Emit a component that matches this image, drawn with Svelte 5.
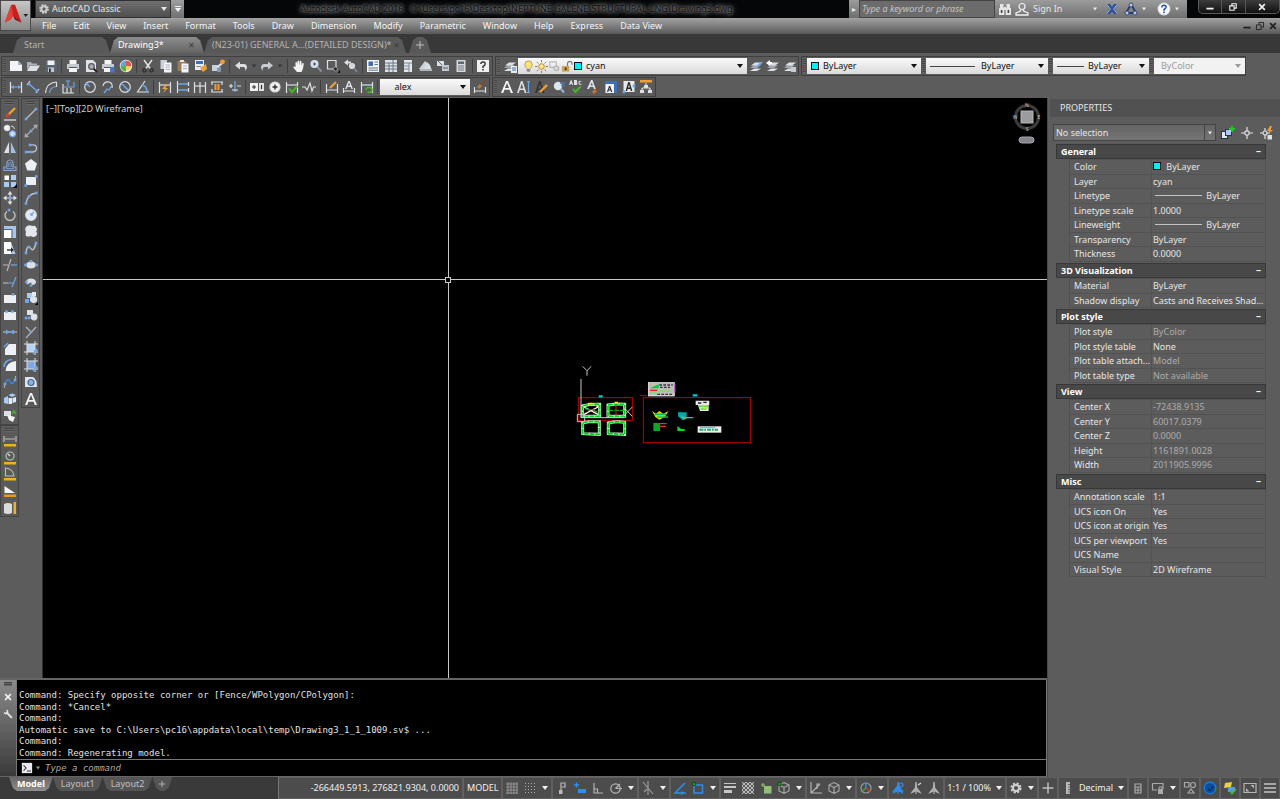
<script>
  const W = "#dcdfe4";
  const B = "#6ea6e8";
  const O = "#f0a030";
  const G = "#49b02c";
  const D = "#2b2b2b";

  // small helpers, every icon is drawn on a 14 x 14 grid
  const s = (d, color = W, width = 1.2) =>
    `<path d="${d}" fill="none" stroke="${color}" stroke-width="${width}"/>`;
  const f = (d, color = W) => `<path d="${d}" fill="${color}"/>`;
  const c = (x, y, r, fill = "none", stroke = W, width = 1.2) =>
    `<circle cx="${x}" cy="${y}" r="${r}" fill="${fill}" stroke="${stroke}" stroke-width="${width}"/>`;
  const dot = (x, y, color = B) => f(`M${x - 1.3} ${y - 1.3}h2.6v2.6h-2.6z`, color);
  const dots = (...points) => points.map(([x, y]) => dot(x, y)).join("");

  const letterA = "M1 13L6 1H8L13 13H10.8L9.6 9.8H4.4L3.2 13ZM5 8H9L7 3Z";
  const smallA = "M3 9L6.2 1H7.8L11 9H9.4L8.6 7H5.4L4.6 9ZM5.9 5.6H8.1L7 2.8Z";
  const printer = f("M3.5 1H10.5V5H3.5Z", "#f4f4f4") + f("M1 5H13V10H1Z", "#c4cad2") + f("M3 8.5H11V13H3Z", "#f4f4f4") + s("M3 8.5H11", "#555", 1);
  const layers = f("M1 9L5 6H12L8 9Z", "#9fa6b0") + f("M2 6.5L6 3.5H13L9 6.5Z", W) + f("M1 12L5 9.5H12L8 12Z", W);
  const dimFrame = s("M1.5 2V13M12.5 2V13") + s("M2 5H12");
  const annot = "M6.3 1H7.7L8.2 7L13 13L7.6 10.5V13H6.4V10.5L1 13L5.8 7Z";
  const cube = s("M7 1.5L12 4V10L7 12.5L2 10V4ZM2 4L7 6.5L12 4M7 6.5V12.5", "#aaa", 1.1);

  const icons = {
    new: f("M1 2H9L13 6V12H1Z", "#f2f4f8") + f("M9 2V6H13Z", "#aab2c0"),
    open: f("M1 3H5L6 4.5H11V6H4L1 11Z", "#a9b0b8") + f("M4 6.5H14L10.5 12H1Z", W),
    save: f("M1.5 1.5H12.5V13H1.5Z", "#5b6472") + f("M3.5 1.5H10.5V6H3.5Z", "#eef1f5") + f("M4 8.5H10V13H4Z", "#bfc7d2") + f("M5 9.5H6.8V13H5Z", D),
    print: printer,
    preview: f("M2 1H9L12 4V13H2Z", "#dfe3e8") + c(7.5, 7.5, 2.8, "#aab", "#555") + s("M9.6 9.6L13 13", "#222", 2),
    publish: printer + f("M9 8H13.5V13.5H9Z", "#4d79b8"),
    globe: c(7, 7, 5.6, "#f4d35e", "#eee") + f("M7 1.5A5.5 5.5 0 0 1 12.5 7H7Z", "#e0564a") + f("M7 7V12.5A5.5 5.5 0 0 1 1.5 7Z", "#56b04c") + f("M1.5 7A5.5 5.5 0 0 1 7 1.5V7Z", "#5aa9e0"),
    cut: s("M3 1L9.5 10M11 1L4.5 10", "#e6e6e6", 1.4) + c(3.5, 11.3, 1.7, "none", D) + c(10.5, 11.3, 1.7, "none", D),
    copy: f("M1.5 1H8V10H1.5Z", "#cbd0d8") + f("M5 3.5H12.5V13.5H5Z", "#f3f5f8") + s("M6.5 6H11M6.5 8.2H11M6.5 10.5H11", "#9aa3b0", 0.8),
    paste: f("M1.5 2H10V12H1.5Z", "#9b7d55") + f("M4 1H8V3H4Z", "#e4e4e4") + f("M5.5 4.5H12.5V13.5H5.5Z", "#f3f5f8") + s("M7 7H11M7 9.5H11", "#9aa3b0", 0.8),
    match: f("M1 1H10V11H1Z", "#e9edf4") + f("M2 2H9V5H2Z", "#3d6fb5") + f("M6 9L12 5L13 10L9 13Z", O) + s("M2.5 7.5H7", "#789", 1),
    block: f("M1 6H8V12H1Z", "#c6d0de") + f("M6 8H10V13H6Z", "#8696aa") + f("M5 8L12 2L13 4L7 9Z", W) + c(11.5, 2.8, 1.8, O, O),
    undo: f("M1 6.5L6 2.5V5H10Q13 5 13 9L11 12Q12 8 9 8H6V10.5Z"),
    redo: f("M13 6.5L8 2.5V5H4Q1 5 1 9L3 12Q2 8 5 8H8V10.5Z", "#c7cbd0"),
    pan: f("M3.5 8V3.5Q4.2 2.6 5 3.5V6L5.6 2Q6.4 1 7.2 2V6L8 2Q8.8 1.2 9.5 2.4V6.5L10.6 4Q11.6 3.6 11.8 4.8L11 9.5L9.5 13H5L1.2 8.5Q1.6 7 3.5 8Z", "#f2f2f2"),
    zoom: c(5.5, 5, 3.5, "#cfe0f2", W) + s("M8.3 7.8L12.5 12.5", "#8993a0", 2) + s("M4 5H7M5.5 3.5V6.5", "#345", 0.9),
    zoomwin: s("M1.5 1.5H10V10H1.5Z") + c(9.5, 10, 2, "#222", "#999", 1) + f("M12 14H14V11Z", "#000"),
    zoomprev: c(8, 7, 2.5, "#cfd6de", W) + s("M10 9L13 13", "#7c8590", 1.8) + f("M0 3.5L4 0.5V2.5H7V4.5H4V6.5Z"),
    props: f("M1 1H13V13H1Z", "#f0f2f6") + f("M2.5 2.5H7V7H2.5Z", "#3d6fb5") + s("M8.5 3H12M8.5 5.5H12M2.5 9H12M2.5 11.2H12", "#6b7685", 1),
    center: f("M1 1H13V13H1Z", "#dde1e8") + s("M1 4H13M5 4V13M9 1V13M1 7H13M1 10H13", "#6b7685", 1),
    palettes: f("M3 1H11V13H3Z", "#e4e7ec") + s("M3 4H11M8 4V13M3 7H8M3 10H8", "#7d8794", 1),
    sheets: f("M0 10L6 2L8 4L4 12Z", "#cfd4da") + f("M4 11L8 3L11 6L13 12Z", W) + f("M1 10H13V12H1Z", "#aeb5bd"),
    markup: f("M1 2H8V7H1Z", W) + f("M6 6H13V12H6Z", "#c2c8d0") + s("M2 2L6 6M8 3L12 5M7 9H12", "#5c6570", 1),
    calc: f("M2.5 1H11.5V13H2.5Z", "#d5d8dc") + f("M4 2.5H10V5H4Z", "#60676f") + s("M4 7H10M4 9H10M4 11H10", "#777e87", 1),
    help: f("M1 1H13V13H1Z", "#f0f0f0") + s("M4.8 5Q5 3 7 3Q9.3 3 9.2 5Q9 6.5 7 7.5V9", "#333", 1.5) + f("M6.2 10H7.8V11.5H6.2Z", "#333"),
    layerprops: layers + f("M8 7H14V14H8Z", "#e8ecf2") + s("M9 9H13M9 11H13", "#3d6fb5", 1),
    layerset: layers + s("M8 8L13 3", "#6ea6e8", 1.8),
    layerprev: layers + f("M0 4L4 1V3H6V5H4V7Z", "#fff"),
    layerstate: layers + f("M8 8H13V13H8Z", "#c6ccd4"),

    dimlin: s("M1.5 2V13M12.5 2V13", W, 1.3) + s("M2 7H12", B) + f("M2 7L5 5V9ZM12 7L9 5V9Z", B),
    dimali: s("M1 5L4 1M10 13L13 9") + s("M3 4L11 11", B, 1.5) + dots([3, 4], [11, 11]),
    dimarc: s("M1.5 13Q2 3 12.5 2") + s("M5.5 13Q6 7 12.5 6.5", B) + s("M12.5 2V7"),
    dimord: s("M2 4V13H13M6 13V8M10 13V8") + s("M3 7H13V2M5 1H9M7 1V6", B, 1.1),
    dimrad: c(7, 7, 5.3) + s("M7 7L3 3", B) + f("M2.5 2.5L6 4L4 6Z", B),
    dimjog: s("M2 6Q3 1 8 2Q12 3 11 8") + s("M3 13L6 9L8 10L11 5", B, 1.3),
    dimdia: c(7, 7, 5.3) + s("M3.5 3.5L10.5 10.5", B, 1.6),
    dimang: s("M9 1L1.5 12H13", W) + s("M6 5Q11 6 11 12", B, 1.6),
    qdim: dimFrame + f("M8 4L4 9H7L5 13L10 8H7.5L9.5 4Z", O),
    dimbase: s("M1.5 1V13") + s("M2 4H12M2 10H12", B, 1.5) + s("M12.5 2V6M12.5 8V12"),
    dimcont: s("M1.5 2V13M7 2V13M12.5 2V13") + s("M2 6H12"),
    dimspace: s("M1 2H13M1 12H13M2 2V5M12 2V5M2 12V9M12 12V9") + f("M4.5 4H9.5V10H4.5Z", O) + s("M7 4V10", "#654", 1),
    dimbreak: s("M1 6H5M9 6H13") + s("M7 1V12", B, 1.3) + s("M4 10H10M3 8V4"),
    tol: f("M0 3H8V11H0Z", "#f0f0f0") + s("M2 7H6M4 5V9", D, 1) + f("M9 3H14V11H9Z", "#e0e0e0") + s("M11.5 5V9", D, 1.2),
    centermark: c(7, 7, 5, "#f0f0f0", "#ddd") + s("M4.5 7H9.5M7 4.5V9.5", D, 1.4),
    inspect: dimFrame + s("M4 8.5L7 12L12.5 6", G, 2.2),
    jogline: s("M0 7H3L5 10L8 3L10 11L11.5 7H14"),
    dimedit: s("M1.5 4V13M12.5 4V13M2 10H12") + s("M5 8L11 2", O, 2.2),
    dimtedit: s("M1.5 8V13M12.5 8V13M2 11H12") + f(smallA),
    dimupd: dimFrame + s("M6 10Q6 7.5 9 7.5Q12 7.5 12 10Q12 12.5 9 12.5L7.5 11.5", G, 1.6),
    dimstyle: s("M1.5 7V13M12.5 7V13M2 11H12") + s("M5 8L8 5", "#b87936", 3) + s("M8 5L12 1", "#7d4a22", 1.6),
    mtext: f(letterA, "#f4f4f4"),
    textA: f("M0 13L4 1H5.5L9.5 13H7.7L6.8 10H2.7L1.8 13ZM3.2 8.4H6.3L4.8 3.5Z") + s("M10 1.5H13M11.5 1.5V12.5M10 12.5H13", B),
    textedit: f("M0 13L4 1H5.5L9.5 13H7.7L6.8 10H2.7L1.8 13ZM3.2 8.4H6.3L4.8 3.5Z", "#333") + s("M5 12L12 5", O, 2.4),
    find: c(6, 6, 3.6, "#d7e6f6", W) + s("M9 9L12 12.5", "#8fb6dd", 2) + s("M8 3H13M9 5.5H13", "#4d79b8", 1.4),
    spell: f("M0 5L1.8 0H2.4L4.2 5H3.2L2.8 4H1.5L1.1 5ZM5 0H7.5Q8.8 1.4 7.8 2.5Q9 4 7.6 5H5ZM13 1.4L12.3 1.8Q10.6 1 10.5 2.6Q10.7 4.4 12.3 3.7L13 4.2Q9.4 6 9.4 2.6Q9.6 -.4 13 1.4Z") + s("M4 9L6.5 12L11.5 6.5", G, 2),
    textstyle: f("M0 9L4 0H5.5L8.8 9H7L6.2 7H3L2 9ZM3.6 5.4H5.8L4.8 2.6Z") + s("M6 13L9 10", "#b87936", 3) + s("M9 10L13 6", "#7d4a22", 1.6),
    scale: f("M1 1H13V13H1Z", "#3d6fb5") + f("M1.5 4H10V13H1.5Z", "#eef1f5") + f("M3 12L5 6H6.2L8.2 12H7L6.6 10.6H4.6L4.2 12ZM5 9.4H6.2L5.6 7.4Z", D),
    justify: f("M1.5 1H12.5V12H1.5Z", "#e6e8eb") + f("M3.5 11L6.2 2H7.6L10.4 11H8.8L8.3 9H5.6L5.1 11ZM6 7.6H7.8L7 4.6Z", D) + dots([2, 12], [12, 6]),
    convert: f("M1 0H13V2.5H1Z", O) + s("M7 3V6M3 8H11M3 8V10M11 8V10", W) + f("M1 10H5V13H1ZM9 10H13V13H9ZM5 5H9V8H5Z"),

    erase: s("M4 9L12 1", O, 2.4) + s("M3 10L6 7", "#c9452d", 3) + s("M1 13H13", W, 1.3),
    copyobj: c(4, 4, 2.6, "#f4f4f4", W) + c(9.5, 9.8, 3, "#cfe0f6", B) + s("M8 2Q11 2 11.5 5", W, 1),
    mirror: f("M6 1V12H1Z", W) + f("M8 1V12H13Z", "#9cc0ea") + s("M7 0V14", "#777", 0.8),
    offset: s("M1 12.5H13V9H10Q11 2 7 2Q3 2 4 9H1Z", "#8aa4c8") + s("M3 10.7H11M6 9Q5 4.5 7 4.5Q9 4.5 8 9", B, 1),
    array: f("M1.5 1.5H6V6H1.5Z", "#fff") + f("M8 1H13V6H8ZM1 8H6V13H1ZM8 8H13V13H8Z", "#a9cbf4") + f("M10 14H14V10Z", "#000"),
    move: s("M7 2V12M2 7H12") + f("M7 0L9.5 3.5H4.5ZM7 14L9.5 10.5H4.5ZM0 7L3.5 4.5V9.5ZM14 7L10.5 4.5V9.5Z") + dot(7, 7),
    rotate: s("M4 3.5A5 5 0 1 0 10 3.5", "#bcbcbc", 1.5) + dot(6, 2),
    scaleobj: f("M1 1H13V13H1Z", "#a9c4ea") + f("M1 5H8.5V13H1Z", "#fff") + s("M1 4.5H9V13", "#4a6288", 1),
    stretch: f("M1 1H8V13H1Z", "#fff") + f("M8 1L12.5 13H8Z", "#a9cbf4") + s("M4 9H9", D, 1.4) + f("M8 6.5L11 9L8 11.5Z", D),
    trim: s("M0 7H5M8 1L4 13", "#b5b5b5") + s("M8 7H14", B),
    extend: s("M0 8H5", "#b5b5b5") + s("M5 8H10M13 2L9 12", B),
    breakpt: f("M1 4H13V12H1Z", "#eceff4") + dot(10, 3.5),
    breakobj: f("M1 4H13V12H1Z", "#eceff4") + dots([3.5, 3.5], [9.5, 3.5]),
    join: s("M0 7H14", "#bbb") + f("M3 4.5L7 7L3 9.5ZM11 4.5L7 7L11 9.5Z", B),
    chamfer: f("M6 2H13V13H2V7Z", "#eceff4") + s("M1 5L5 1", B, 1.5),
    fillet: f("M13 3Q3 4 2.5 13H13Z", "#eceff4") + s("M1 9Q1.5 2 9 1.5", B, 1.6),
    blend: s("M2 9Q5 1 7.5 7Q9 11 12 5", "#3d86d8", 1.4) + s("M1.5 13V9M12.5 5V1", "#aaa") + dots([2, 9], [12, 5]),
    explode: f("M1 6L5 4V12L1 11ZM5.5 3L9 1.5L13 3L9 5Z", "#a9cbf4") + f("M5.5 6H9V12H5.5ZM9.5 6L13 5V10L9.5 11Z", "#dceafa"),
    replace: f("M1 2H8V7H1Z") + f("M4 6L12 8L10 13L6 11Z", "#f3f3f3") + s("M9 5L11 2L13 5", G, 1.6),

    line: s("M2 12L12 2", "#b5b5b5", 1.4) + dots([2, 12], [12, 2]),
    xline: s("M2 12L12 2", "#aaa") + f("M0.5 13.5L1 9L5 13ZM13.5 0.5L9 1L13 5Z", "#aaa") + dot(7, 7),
    pline: s("M1 11H9Q13 10 12.5 6.5Q12 3 6 4", "#b9c4d2", 1.3) + dots([2, 11], [7, 11], [6, 4]),
    polygon: f("M7 1L13 5.6L10.8 12.6H3.2L1 5.6Z", "#eceff4"),
    rect: f("M2 3H12V11H2Z", "#eceff4") + dots([1.8, 11.5], [12.2, 2.5]),
    arc: s("M2 13Q3 3 12.5 2", "#b9c4d2", 1.3) + dots([2, 12.5], [5, 5.5], [12.3, 2]),
    circle: c(7, 7, 5.3, "#e3e9f2", W) + dot(7.5, 6.5) + s("M7.5 6.5L10 4", B),
    revcloud: f("M3 2Q6 .5 8 2Q11 1 12 3Q14 6 12 7Q14 10 12 12Q9 14 7 12Q4 13 2 12Q1 10 2 8Q0 4 3 2Z", "#e3e6ec"),
    spline: s("M2 12Q3 3 6.5 7Q9.5 12 12 2", "#b9c4d2", 1.4) + dots([2, 12], [5, 6], [12, 2]),
    ellipse: f("M2 7A5 3.5 0 0 1 12 7A5 3.5 0 0 1 2 7Z") + dots([1.5, 7], [12.5, 7], [7, 3.3]),
    ellarc: f("M2 7A5 3.5 0 0 1 12 7Q12 9.5 8 10L7 7.5L3 9.5Z") + dots([2.5, 7], [7, 10.5]),
    insert: f("M3 2H8V7H3Z", "#a9cbf4") + c(9.5, 8.5, 3, "#dce3ec", W) + f("M8 1H12V5H8Z", "#dceafa") + f("M1 8H5V12H1Z", B) + f("M11 14H14V11Z", "#000"),
    makeblock: f("M3 2H9V7H3Z", W) + c(10, 9, 2.8, "#dce3ec", W) + dots([2, 10], [5, 10]),
    point: s("M2 13L12 2", "#b5b5b5") + s("M2 2L7 7", "#b5b5b5") + dot(7, 7),
    hatch: f("M3 3H11V11H3Z", "#b4d2f7") + s("M0 3H14M0 11H14M3 0V14M11 0V14", W, 1) + s("M9 13L13 8M10 10H14", B, 1.3),
    gradient: f("M3 3H11V11H3Z", "#7fa8e2") + s("M0 3H14M0 11H14M3 0V14M11 0V14", W, 1) + s("M9 13L13 8M10 10H14", B, 1.3),
    region: f("M1 2H9Q13 4 13 12H1Z", "#dde3ec") + c(7, 7.5, 3, "#8ab2e6", "#46688f"),
    text: f(letterA, "#f4f4f4"),

    distance: s("M1 2V8M13 2V8M2 5H12", "#bbb") + f("M1 10H13V12.5H1Z", "#eeb31c"),
    radius: c(7, 5, 4, "none", "#bbb") + s("M7 5L5 3", "#ddd") + f("M1 11H13V13.5H1Z", "#eeb31c"),
    angle: s("M2.5 9V1Q10 1.5 11 9Z", "#bbb") + f("M1 11H13V13.5H1Z", "#eeb31c"),
    area: f("M1.5 2L12 9H1.5Z", "#f4f4f4") + f("M1 10.5H13V13H1Z", "#e79a1a"),
    volume: f("M1 3Q5 1 9 3V12Q5 14 1 12Z", "#dcdcdc") + f("M10.5 1H13V13H10.5Z", "#eeb31c"),

    grid: s("M3 1V13M6 1V13M9 1V13M12 1V13M1 3H13M1 6H13M1 9H13M1 12H13", "#9a9a9a", 0.9),
    snapgrid: [2, 5, 8, 11].flatMap((x) => [2, 5, 8, 11].map((y) => f(`M${x} ${y}h1v1h-1z`, "#aaa"))).join(""),
    infer: s("M6 10V2H10V6H7", "#bbb") + f("M4 9H7.5V13H4Z", "#bbb"),
    dyn: s("M1 4H6M3.5 1.5V6.5", "#2f8cf0", 1.4) + f("M5 8H13V12H5Z", "#2f8cf0"),
    ortho: s("M3 2V12H12M3 8H6.5V12", "#b4b4b4"),
    polar: c(6.5, 7.5, 4.7, "none", "#b4b4b4") + s("M6.5 7.5H13M6.5 7.5L11 3", "#b4b4b4"),
    iso: s("M2 1L12 13M7 0V14M3 11L6 8", "#a0a0a0", 1.1),
    otrack: s("M12 2L2 12H13", "#2f8cf0", 1.5) + dot(9, 12, "#2f8cf0"),
    osnap: s("M3 4H11.5V12H3Z", "#2f8cf0", 1.5) + c(3, 3, 1.8, "#1ca51c", "#0b3b0b", 0.8),
    lwt: f("M1 2H13V3H1ZM1 5H13V7H1ZM1 9H9V12H1Z", "#c6c6c6"),
    transp: f("M1 1H13V13H1Z", "#5f5f5f") + s("M1 1L13 13M5 1L13 9M9 1L13 5M1 5L9 13M1 9L5 13M13 1L1 13M9 1L1 9M5 1L1 5M13 5L5 13M13 9L9 13", "#c2c2c2", 0.9),
    cycle: s("M2 4H6M4 2V6", "#8cba6e") + f("M5 5H12.5V12.5H5Z", "#93bd78"),
    osnap3d: cube + c(2.6, 3, 1.8, "#1ca51c", "#0b3b0b", 0.8),
    ucs: s("M2 1V12H13M2 12L11 3M8 8V3H11", "#b4b4b4"),
    filter: cube,
    gizmo: c(7, 7, 5, "none", "#9a9a9a") + s("M7 1V7", "#3a8df0", 1.4) + s("M7 7L12 11", "#c73a2c", 1.4) + s("M7 7L2 11", "#39a63a", 1.4),
    annoVis: f(annot, "#2f8cf0") + s("M7 5L2 11M7 5L12 11", "#2f8cf0", 1.6) + c(10, 4, 2, "none", "#2f8cf0", 1.2),
    annoAuto: f(annot, "#b0b0b0") + s("M7 7L3 11.5M7 7L11 11.5", "#b0b0b0", 1.6) + s("M9 4L12 2", "#ddd"),
    anno: f(annot, "#b0b0b0") + s("M7 7L3 11.5M7 7L11 11.5", "#b0b0b0", 1.6),
    gear: `<circle cx="7" cy="7" r="4.4" fill="none" stroke="#cfcfcf" stroke-width="2.4" stroke-dasharray="2.1 1.35"/>` + c(7, 7, 3, "none", "#cfcfcf", 2),
    plus: s("M7 1.5V12.5M1.5 7H12.5", "#bdbdbd", 1.5),
    units: f("M5 1H9V13H5Z", "#b9b9b9") + s("M7 3.5H9M7 6H9M7 8.5H9M7 11H9", "#555", 0.9),
    quick: s("M4 3H10V12H4Z", "#aaa") + s("M4 6H10M4 9H10M7 6V12", "#aaa", 1),
    lockui: s("M1.5 2.5H12V8M1.5 2.5V9H6", "#aaa") + f("M7 8H12V13H7Z", "#aaa") + s("M8 8V6H11V8", "#aaa", 1),
    isolate: s("M1.5 1.5H6V6H1.5Z", "#aaa") + c(10, 4, 2.5, "none", "#aaa") + s("M5 12L8 8L11 12Z", "#aaa"),
    hw: c(7, 7, 5.8, "#0c4f9c", "#1a7fe8") + s("M5 8L7 9.5L10 5.5", "#0a2f5f", 1.4),
    trusted: f("M2 2L9 1L8 6L1 7Z", "#f0cf3c") + f("M5 6H12V11H5Z", "#5a9de0") + s("M7 10L9 12.5L13 8", G, 1.8),
    clean: s("M1 2.5H13V11.5H1Z", "#b4b4b4") + f("M7.5 4H11V7.5ZM3 7V10.5H6.5Z", "#b4b4b4"),
    menu: s("M1 3H13M1 7H13M1 11H13", "#c4c4c4", 1.5),

    bulb: f("M7 1Q11 1 11 5Q11 7 9 9H5Q3 7 3 5Q3 1 7 1Z", "#fbe37a") + s("M5 9Q3 7 3 5Q3 1 7 1Q11 1 11 5Q11 7 9 9", "#a08a40", 0.8) + f("M5 9.5H9V12L7 13L5 12Z", "#8b8b8b"),
    sun: c(7, 7, 3, "#ffe48a", "#b08a2e", 1) + s("M7 0V2.5M7 11.5V14M0 7H2.5M11.5 7H14M2 2L3.7 3.7M10.3 10.3L12 12M12 2L10.3 3.7M2 12L3.7 10.3", "#8f7433", 1),
    vpfreeze: s("M2 2H9V8H2Z", "#b9b9b9") + c(9, 9, 2.6, "#d8d8d8", "#b0b0b0"),
    lock: f("M1 6.5H9V12.5H1Z", "#c7a65a") + s("M7 6.5V4Q7 1.5 9.5 1.5Q12 1.5 12 5", "#7d7d7d", 1.3) + f("M4 8H6V11H4Z", "#4b3d1c"),

    binoc: f("M2 2H5.5V6H2ZM8.5 2H12V6H8.5ZM1 6H6.3V13H1ZM7.7 6H13V13H7.7ZM6 5H8V8H6Z", "#e4e4e4") + s("M3.6 8V11M10.4 8V11", "#444", 1.6),
    user: c(7, 4.5, 3, "none", "#f0f0f0") + s("M5.5 7.5V9L1 11V13H13V11L8.5 9V7.5", "#f0f0f0", 1.3),
    exchange: f("M1 2H5L7 5L9 2H13L9.5 7L13 12H9L7 9L5 12H1L4.5 7Z", "#2c4f97") + s("M1.5 2L5.5 7L1.5 12M12.5 2L8.5 7L12.5 12", "#c5d3f0", 0.8),
    a360: s("M7 2L12 11H2Z", "#263b6b", 1.8) + c(7, 3, 2, "#b9c8ea", "#263b6b", 0.8) + c(3, 11, 2, "#b9c8ea", "#263b6b", 0.8) + c(11, 11, 2, "#b9c8ea", "#263b6b", 0.8),
    helpball: c(7, 7, 5.8, "#fff", "#dfe6f2") + s("M4.8 5.5Q5 3.3 7 3.3Q9.3 3.4 9.1 5.4Q8.8 6.6 7 7.4V8.7", "#1f55b0", 1.6) + f("M6.2 9.6H7.8V11.2H6.2Z", "#1f55b0"),
    min: f("M2 8H12V10.5H2Z", "#f0f0f0"),
    restore: s("M2.5 5.5H8.5V11.5H2.5ZM5.5 5V2.5H11.5V8.5H9", "#f0f0f0", 1.6),
    close: s("M3 3L11 11M11 3L3 11", "#f0f0f0", 2.4),
    darkmin: f("M2 8H12V10.5H2Z", "#222"),
    darkrestore: s("M2 5.5H8.5V12H2ZM5.5 5V2H12V8.5H9", "#222", 1.3),
    darkclose: s("M3 3L11 11M11 3L3 11", "#222", 2.4),
    quickselect: f("M0 5H7V13H0Z", "#26344a") + f("M1 6H6V12H1Z", "#dfe9f6") + f("M4 3H11V10H4Z", "#26344a") + f("M5 4H10V9H5Z", "#a9cbf4") + s("M11 0V6M8 3H14", "#27c427", 1.8),
    pick: s("M7 1V13M1 7H13", W) + c(7, 7, 2.2, "#5a5a5a", W),
    pickadd: s("M6 2V13M1 7H11", W) + c(6, 7, 2, "#5a5a5a", W) + f("M11 0L8 5H10.5L9 8L14 4H11.5L13 0Z", O) + f("M8.5 9H13V13.5H8.5Z", W),
    wrench: s("M4.5 4.5L12.5 12.5", "#e6e6e6", 2.6) + s("M1.5 5Q5.5 8 6.5 5Q7 2 5 1.5", "#e6e6e6", 2),
    prompt: f("M1 1H13V13H1Z", "#e8e8ee") + s("M3 4L6 7L3 10M7 10.5H11.5", "#333", 1.2),
  };

  const menus = ["File", "Edit", "View", "Insert", "Format", "Tools", "Draw", "Dimension", "Modify", "Parametric", "Window", "Help", "Express", "Data View"];

  const standardBar = [
    ["new", "open", "save"],
    ["print", "preview", "publish", "globe"],
    ["cut", "copy", "paste", "match", "block"],
    ["undo", "caret", "redo", "caret"],
    ["pan", "zoom", "zoomwin", "zoomprev"],
    ["props", "center", "palettes", "sheets", "markup", "calc"],
    ["help"],
  ];
  const dimensionBar = [
    ["dimlin", "dimali", "dimarc", "dimord"],
    ["dimrad", "dimjog", "dimdia", "dimang"],
    ["qdim", "dimbase", "dimcont", "dimspace", "dimbreak"],
    ["tol", "centermark", "inspect", "jogline"],
    ["dimedit", "dimtedit", "dimupd"],
  ];
  const textBar = ["mtext", "textA", "textedit", "find", "spell", "textstyle", "scale", "justify", "convert"];
  const modifyBar = ["erase", "copyobj", "mirror", "offset", "array", "move", "rotate", "scaleobj", "stretch", "trim", "extend", "breakpt", "breakobj", "join", "chamfer", "fillet", "blend", "explode", "replace"];
  const inquiryBar = ["distance", "radius", "angle", "area", "volume"];
  const drawBar = ["line", "xline", "pline", "polygon", "rect", "arc", "circle", "revcloud", "spline", "ellipse", "ellarc", "insert", "makeblock", "point", "hatch", "gradient", "region", "text"];

  const statusGroups = [
    ["grid", "snapgrid", "caret"],
    ["infer", "dyn", "ortho", "polar", "caret"],
    ["iso", "caret"],
    ["otrack", "osnap", "caret"],
    ["lwt", "transp", "cycle", "osnap3d", "caret"],
    ["ucs", "filter", "caret"],
    ["gizmo", "caret"],
    ["annoVis", "annoAuto", "anno"],
    ["1:1 / 100%", "caret"],
    ["gear", "caret"],
    ["plus"],
    ["units", "Decimal", "caret"],
    ["quick"],
    ["lockui", "caret"],
    ["isolate"],
    ["hw"],
    ["trusted"],
    ["clean"],
    ["menu"],
  ];

  // dim = read only value, line / swatch = sample drawn before the value
  let sections = $state([
    {
      title: "General",
      open: true,
      rows: [
        { name: "Color", value: "ByLayer", swatch: true },
        { name: "Layer", value: "cyan" },
        { name: "Linetype", value: "ByLayer", line: true },
        { name: "Linetype scale", value: "1.0000" },
        { name: "Lineweight", value: "ByLayer", line: true },
        { name: "Transparency", value: "ByLayer" },
        { name: "Thickness", value: "0.0000" },
      ],
    },
    {
      title: "3D Visualization",
      open: true,
      rows: [
        { name: "Material", value: "ByLayer" },
        { name: "Shadow display", value: "Casts and Receives Shad..." },
      ],
    },
    {
      title: "Plot style",
      open: true,
      rows: [
        { name: "Plot style", value: "ByColor", dim: true },
        { name: "Plot style table", value: "None" },
        { name: "Plot table attach...", value: "Model", dim: true },
        { name: "Plot table type", value: "Not available", dim: true },
      ],
    },
    {
      title: "View",
      open: true,
      rows: [
        { name: "Center X", value: "-72438.9135", dim: true },
        { name: "Center Y", value: "60017.0379", dim: true },
        { name: "Center Z", value: "0.0000", dim: true },
        { name: "Height", value: "1161891.0028", dim: true },
        { name: "Width", value: "2011905.9996", dim: true },
      ],
    },
    {
      title: "Misc",
      open: true,
      rows: [
        { name: "Annotation scale", value: "1:1" },
        { name: "UCS icon On", value: "Yes" },
        { name: "UCS icon at origin", value: "Yes" },
        { name: "UCS per viewport", value: "Yes" },
        { name: "UCS Name", value: "" },
        { name: "Visual Style", value: "2D Wireframe" },
      ],
    },
  ]);

  const history = [
    "Command: Specify opposite corner or [Fence/WPolygon/CPolygon]:",
    "Command: *Cancel*",
    "Command:",
    "Automatic save to C:\\Users\\pc16\\appdata\\local\\temp\\Drawing3_1_1_1009.sv$ ...",
    "Command:",
    "Command: Regenerating model.",
  ];

  let command = $state("");
</script>

{#snippet icon(name)}
  <svg class="icon" viewBox="0 0 14 14" aria-hidden="true">{@html icons[name]}</svg>
{/snippet}

{#snippet tool(name)}
  {#if name === "caret"}
    <button class="caret-btn" aria-label="More options"><span class="caret"></span></button>
  {:else if icons[name]}
    <button class="tool" aria-label={name}>{@render icon(name)}</button>
  {:else}
    <button class="label-btn">{name}</button>
  {/if}
{/snippet}

<div class="app">
  <header class="top">
    <button class="app-btn" aria-label="Application menu">
      <svg viewBox="0 0 31 31" aria-hidden="true">
        <path d="M4 23L11 4H15L22 23L16 20L13 16L10 20Z" fill="#c8201f" />
        <path d="M11 4L13 16L10 20L4 23Z" fill="#e2403a" />
        <path d="M13 16L22 23L15 20Z" fill="#7d0f12" />
        <path d="M24 14H29L26.500 17Z" fill="#222" />
      </svg>
    </button>
    <div class="top-rows">
      <div class="title-bar">
        <label class="workspace">
          {@render icon("gear")}
          <select aria-label="Workspace"><option>AutoCAD Classic</option></select>
          <span class="caret"></span>
        </label>
        <button class="qat-more" aria-label="Customize"><span class="dash"></span><span class="caret"></span></button>
        <h1>Autodesk AutoCAD 2016 &nbsp; C:\Users\pc16\Desktop\NEPTUNE GALENE\STRUCTURAL-LNG\Drawing3.dwg</h1>
        <div class="info-center">
          <button class="expand" aria-label="Collapse search">▸</button>
          <input class="search" type="text" placeholder="Type a keyword or phrase" aria-label="Search" />
          {@render tool("binoc")}
          <button class="sign-in">{@render icon("user")}<span>Sign In</span><span class="caret"></span></button>
          {@render tool("exchange")}
          <button class="with-caret" aria-label="A360">{@render icon("a360")}<span class="caret"></span></button>
          <button class="with-caret help-btn" aria-label="Help">{@render icon("helpball")}<span class="caret"></span></button>
        </div>
        <div class="window-btns">
          {#each ["min", "restore", "close"] as name}
            <button aria-label={name}>{@render icon(name)}</button>
          {/each}
        </div>
      </div>
      <nav class="menu-bar">
        {#each menus as item}
          <button>{item}</button>
        {/each}
        <div class="doc-btns">
          {#each ["darkmin", "darkrestore", "darkclose"] as name}
            <button aria-label={name.slice(4)}>{@render icon(name)}</button>
          {/each}
        </div>
      </nav>
    </div>
  </header>

  <div class="file-tabs">
    <button class="file-tab start">Start</button>
    <button class="file-tab active">Drawing3*<span class="x">✕</span></button>
    <button class="file-tab">(N23-01) GENERAL A...(DETAILED DESIGN)*<span class="x">✕</span></button>
    <button class="file-tab add" aria-label="New drawing">{@render icon("plus")}</button>
  </div>

  <div class="bars">
    <div class="bar-row">
      <div class="bar standard">
        <i class="grip"></i>
        {#each standardBar as group}
          {#each group as name}{@render tool(name)}{/each}
          <i class="sep"></i>
        {/each}
      </div>
      <div class="bar">
        <i class="grip"></i>
        {@render tool("layerprops")}
        <label class="combo layer">
          {#each ["bulb", "sun", "vpfreeze", "lock"] as name}{@render icon(name)}{/each}
          <span class="swatch"></span>
          <select aria-label="Layer"><option>cyan</option></select>
          <span class="caret"></span>
        </label>
        {#each ["layerset", "layerprev", "layerstate"] as name}{@render tool(name)}{/each}
      </div>
      <div class="bar">
        <i class="grip"></i>
        <label class="combo color">
          <span class="swatch"></span>
          <select aria-label="Color"><option>ByLayer</option></select>
          <span class="caret"></span>
        </label>
        <i class="grip"></i>
        <label class="combo linetype">
          <span class="sample"></span>
          <select aria-label="Linetype"><option>ByLayer</option></select>
          <span class="caret"></span>
        </label>
        <i class="grip"></i>
        <label class="combo lineweight">
          <span class="sample"></span>
          <select aria-label="Lineweight"><option>ByLayer</option></select>
          <span class="caret"></span>
        </label>
        <i class="grip"></i>
        <label class="combo plotstyle">
          <select aria-label="Plot style" disabled><option>ByColor</option></select>
          <span class="caret"></span>
        </label>
      </div>
    </div>
    <div class="bar-row">
      <div class="bar dimension">
        <i class="grip"></i>
        {#each dimensionBar as group}
          {#each group as name}{@render tool(name)}{/each}
          <i class="sep"></i>
        {/each}
        <label class="combo dimstyle">
          <select aria-label="Dimension style"><option>alex</option></select>
          <span class="caret"></span>
        </label>
        {@render tool("dimstyle")}
      </div>
      <div class="bar text">
        <i class="grip"></i>
        {#each textBar as name}{@render tool(name)}{/each}
      </div>
    </div>
  </div>

  <div class="body">
    <div class="left">
      <div class="work">
        <div class="side">
          <div class="side-col">
            <div class="vbar modify">
              <i class="vgrip"></i>
              {#each modifyBar as name}{@render tool(name)}{/each}
            </div>
            <div class="vbar inquiry">
              <i class="vgrip"></i>
              {#each inquiryBar as name}{@render tool(name)}{/each}
            </div>
          </div>
          <div class="side-col">
            <div class="vbar draw">
              <i class="vgrip"></i>
              {#each drawBar as name}{@render tool(name)}{/each}
            </div>
          </div>
        </div>

        <main class="viewport">
          <p class="view-label">[−][Top][2D Wireframe]</p>
          <svg class="drawing" aria-label="Model space">
            <!-- crosshair -->
            <g stroke="#c8c8c8" stroke-width="1">
              <path d="M0 181.500H402M408 181.500H3000" />
              <path d="M405.500 0V179M405.500 185V2000" />
              <rect x="402.500" y="179.500" width="5" height="5" fill="none" />
            </g>
            <g transform="translate(527 257) scale(.3333)" fill="none">
              <g stroke="#c00000" stroke-width="3">
                <rect x="25" y="128" width="162" height="68" />
                <rect x="220" y="128" width="321" height="135" />
                <path d="M210 122H232" />
              </g>
              <path d="M86 124H98M368 121H382" stroke="#00c8d8" stroke-width="7" />
              <!-- section frames -->
              <g stroke="#c8f0c8" stroke-width="9">
                <path d="M37 184V153Q60 146 89 148V184Z" />
                <path d="M114 184V150Q140 146 164 148V184Z" />
                <path d="M38 236V203L56 200H88V238Z" />
                <path d="M115 236V204Q140 198 164 202V238Z" />
              </g>
              <g stroke="#00d020" stroke-width="5" stroke-dasharray="14 3">
                <path d="M37 184V153Q60 146 89 148V184Z" />
                <path d="M114 184V150Q140 146 164 148V184Z" />
                <path d="M38 236V203L56 200H88V238Z" />
                <path d="M115 236V204Q140 198 164 202V238Z" />
                <path d="M116 166H164" stroke-width="3" />
              </g>
              <path d="M55 146H68M134 143H144M82 150V158" stroke="#ffef00" stroke-width="5" />
              <path d="M42 156L84 178M84 156L42 178" stroke="#fff" stroke-width="4" />
              <path d="M46 160L60 166M70 166L82 172" stroke="#00d020" stroke-width="4" />
              <path d="M52 164H74M138 150V182" stroke="#e02020" stroke-width="3" />
              <!-- title sheet -->
              <rect x="235" y="83" width="78" height="40" fill="#bdbdbd" stroke="#fff" stroke-width="2" />
              <path d="M242 98L266 88V100H242Z" fill="#00d030" />
              <path d="M240 106H262" stroke="#f02020" stroke-width="4" />
              <path d="M264 108H304M240 114H262" stroke="#7fdd70" stroke-width="4" />
              <path d="M268 90H308M270 97H300M262 118H310" stroke="#333" stroke-width="4" stroke-dasharray="8 4" />
              <path d="M315 86V114" stroke="#c020c0" stroke-width="3" />
              <!-- details -->
              <path d="M246 168L258 176L268 168L280 176L296 168L284 186L268 194L256 186Z" fill="#d8e000" />
              <path d="M254 178H288M262 186H294" stroke="#00c060" stroke-width="5" />
              <path d="M324 172H350V192L338 196L324 184Z" fill="#00a8a0" />
              <path d="M334 184L344 190M346 188H370" stroke="#20d0c0" stroke-width="4" />
              <path d="M340 186L346 192" stroke="#f09020" stroke-width="4" />
              <path d="M250 204H270V228H250Z" fill="#00a828" />
              <path d="M262 206H290M266 214H288" stroke="#d04020" stroke-width="4" />
              <path d="M322 214L334 222H344V228H322Z" fill="#00e020" />
              <path d="M377 137H418V150H377ZM384 150H416V168H390Z" fill="#e8e8e8" />
              <path d="M384 144H394M400 142H410" stroke="#222" stroke-width="4" />
              <path d="M386 154H414M392 162H410" stroke="#50e040" stroke-width="5" />
              <path d="M398 156L412 160" stroke="#f0e000" stroke-width="4" />
              <rect x="383" y="214" width="71" height="19" fill="#f0f0f0" />
              <path d="M388 224H444" stroke="#20b060" stroke-width="6" stroke-dasharray="12 3 5 3" />
              <path d="M390 218H436" stroke="#30c8d0" stroke-width="3" />
              <!-- ucs icon -->
              <g stroke="#c8c8c8" stroke-width="3">
                <path d="M33 72V188H162M22 178H44V200H22Z" />
                <path d="M38 34L51 47L64 34M51 47V62" />
                <path d="M160 156L187 184M187 156L160 184" />
              </g>
            </g>
          </svg>
          <svg class="viewcube" viewBox="0 0 30 44" role="img" aria-label="View cube">
            <circle cx="15" cy="15" r="11.500" fill="none" stroke="#3c3c3c" stroke-width="3" />
            <rect x="9" y="9" width="12" height="12" fill="#9b9c9e" stroke="#b6b7b9" stroke-width="1" />
            <g fill="#c8c8c8" font-size="5" text-anchor="middle">
              <text x="15" y="5">N</text><text x="27" y="17">E</text>
              <text x="15" y="29">S</text><text x="3" y="17">W</text>
            </g>
            <rect x="7" y="35" width="15" height="6" rx="3" fill="#85858d" stroke="#a5a5a5" stroke-width="1" />
          </svg>
        </main>
      </div>

      <section class="command">
        <div class="command-side">
          <i class="vgrip"></i>
          <button aria-label="Close">{@render icon("close")}</button>
          <button aria-label="Settings">{@render icon("wrench")}</button>
        </div>
        <div class="command-main">
          <div class="history">
            {#each history as entry}
              <div>{entry}</div>
            {/each}
          </div>
          <label class="command-line">
            {@render icon("prompt")}
            <span class="caret"></span>
            <input type="text" placeholder="Type a command" aria-label="Command" bind:value={command} />
          </label>
        </div>
      </section>
    </div>

    <aside class="properties">
      <h2>PROPERTIES</h2>
      <div class="picker">
        <label class="selection">
          <select aria-label="Selection"><option>No selection</option></select>
          <span class="arrow-box"><span class="caret"></span></span>
        </label>
        {#each ["quickselect", "pick", "pickadd"] as name}{@render tool(name)}{/each}
      </div>
      {#each sections as section}
        <section class="group">
          <button class="group-head" onclick={() => (section.open = !section.open)}>
            <span>{section.title}</span><span>{section.open ? "−" : "+"}</span>
          </button>
          {#if section.open}
            <table>
              <tbody>
                {#each section.rows as row}
                  <tr>
                    <th scope="row">{row.name}</th>
                    <td class:dim={row.dim}>
                      {#if row.swatch}<span class="swatch"></span>{/if}
                      {#if row.line}<span class="sample"></span>{/if}
                      {row.value}
                    </td>
                  </tr>
                {/each}
              </tbody>
            </table>
          {/if}
        </section>
      {/each}
    </aside>
  </div>

  <footer>
    <div class="layout-tabs">
      <button class="layout-tab active">Model</button>
      <button class="layout-tab">Layout1</button>
      <button class="layout-tab">Layout2</button>
      <button class="layout-tab add" aria-label="New layout">{@render icon("plus")}</button>
    </div>
    <div class="status">
      <span class="coords">-266449.5913, 276821.9304, 0.0000</span>
      <div class="status-group model"><button class="label-btn">MODEL</button></div>
      {#each statusGroups as group}
        <div class="status-group">
          {#each group as name}{@render tool(name)}{/each}
        </div>
      {/each}
    </div>
  </footer>
</div>

<style>
  :global(body) {
    margin: 0;
    background: #5c5c5c;
  }

  .app {
    display: flex;
    flex-direction: column;
    min-height: 100vh;
    font-family: "Noto Sans", "Open Sans", sans-serif;
    font-size: 9px;
    line-height: 12px;
    color: #e6e6e6;
    background: #5c5c5c;
  }

  button,
  input,
  select {
    font: inherit;
    color: inherit;
    background: none;
    border: 0;
    padding: 0;
    margin: 0;
    min-width: 0;
    appearance: none;
    border-radius: 0;
    outline: none;
  }

  button {
    display: flex;
    align-items: center;
    justify-content: center;
    white-space: nowrap;
  }

  .icon {
    display: block;
    width: 14px;
    height: 14px;
    flex: none;
  }

  .caret {
    flex: none;
    width: 0;
    height: 0;
    border: 3px solid transparent;
    border-top: 4px solid currentColor;
    border-bottom: 0;
  }

  /* title and menu */
  .top {
    display: flex;
    height: 34px;
  }

  .app-btn {
    width: 31px;
    height: 31px;
    flex: none;
    background: linear-gradient(#c6c6c6, #8a8a8a);
    border: 1px solid #4a4a4a;
  }

  .app-btn svg {
    width: 29px;
    height: 29px;
  }

  .top-rows {
    flex: 1;
    min-width: 0;
    display: flex;
    flex-direction: column;
  }

  .title-bar {
    display: flex;
    height: 18px;
    background: #050608;
  }

  .workspace {
    display: flex;
    align-items: center;
    gap: 2px;
    width: 129px;
    margin-left: 4px;
    padding: 0 3px 0 2px;
    background: linear-gradient(#707070, #4f4f4f);
    border: 1px solid #303030;
  }

  .workspace .icon {
    width: 12px;
    height: 12px;
  }

  .workspace select {
    flex: 1;
  }

  .qat-more {
    flex-direction: column;
    gap: 1px;
    width: 13px;
    background: linear-gradient(#a0a0a0, #707070);
    color: #f4f4f4;
  }

  .dash {
    width: 6px;
    height: 1px;
    background: currentColor;
  }

  h1 {
    flex: 1;
    margin: 0;
    text-align: center;
    font-size: 9px;
    font-weight: 400;
    line-height: 18px;
    color: #101010;
    white-space: nowrap;
    overflow: hidden;
    text-shadow: 0 0 3px #9a9a9a, 0 0 5px #8a8a8a, 0 0 8px #777;
  }

  .info-center {
    display: flex;
    align-items: stretch;
    width: 338px;
    background: linear-gradient(#9c9c9c, #6f6f6f);
  }

  .expand {
    width: 10px;
    font-size: 8px;
  }

  .search {
    width: 132px;
    padding: 0 2px;
    background: #6b6b6b;
    border: 1px solid #444;
    font-style: italic;
  }

  .search::placeholder {
    color: #c4c4c4;
  }

  .info-center .tool {
    width: 20px;
  }

  .sign-in {
    gap: 4px;
    width: 88px;
    padding: 0 4px 0 0;
  }

  .sign-in .caret {
    margin-left: auto;
    transform: scale(0.7);
  }

  .with-caret {
    gap: 3px;
    width: 28px;
  }

  .with-caret .caret {
    transform: scale(0.7);
  }

  .help-btn {
    width: 38px;
  }

  .window-btns {
    display: flex;
    width: 82px;
    height: 14px;
    margin-left: 11px;
    border: 1px solid #5a5a5a;
    border-top: 0;
    border-radius: 0 0 5px 5px;
    background: linear-gradient(#3c3c3c, #111);
    box-sizing: border-box;
  }

  .window-btns button {
    flex: 2;
    border-right: 1px solid #555;
  }

  .window-btns button:last-child {
    flex: 3;
    border: 0;
  }

  .window-btns .icon {
    width: 10px;
    height: 10px;
  }

  .menu-bar {
    display: flex;
    align-items: center;
    gap: 17px;
    height: 16px;
    padding-left: 11px;
    background: linear-gradient(#a2a2a2, #5a5a5a);
    color: #f4f4f4;
  }

  .doc-btns {
    display: flex;
    gap: 3px;
    margin-left: auto;
    padding-right: 2px;
  }

  .doc-btns .icon {
    width: 10px;
    height: 10px;
  }

  /* file tabs */
  .file-tabs {
    display: flex;
    align-items: flex-end;
    height: 22px;
    padding-left: 13px;
    background: #383838;
    border-bottom: 3px solid #5c5c5c;
    box-sizing: border-box;
  }

  .file-tab {
    height: 16px;
    justify-content: space-between;
    padding: 0 9px 0 11px;
    background: #595959;
    color: #b4b4b4;
    clip-path: polygon(0 100%, 4px 20%, 8px 0, calc(100% - 8px) 0, calc(100% - 4px) 20%, 100% 100%);
  }

  .file-tab.start {
    width: 97px;
  }

  .file-tab.active {
    width: 94px;
    padding-left: 8px;
    background: linear-gradient(#8c8c8c, #646464);
    color: #fff;
  }

  .file-tab.active + .file-tab {
    width: 202px;
    padding-left: 8px;
    padding-right: 6px;
  }

  .file-tab.add {
    width: 22px;
    margin-left: 3px;
    padding: 0 6px;
  }

  .file-tab.add .icon {
    width: 10px;
    height: 10px;
  }

  .x {
    color: #3c3c3c;
    font-size: 8px;
  }

  /* toolbars */
  .bars {
    display: flex;
    flex-direction: column;
    gap: 1px;
    padding-bottom: 1px;
  }

  .bar-row {
    display: flex;
    gap: 2px;
    height: 20px;
    padding-left: 1px;
  }

  .bar {
    display: flex;
    align-items: center;
    box-sizing: border-box;
    border: 1px solid #3f3f3f;
    background: #5a5a5a;
  }

  .bar.standard {
    width: 492px;
  }

  .bar.dimension {
    width: 489px;
  }

  .bar.text {
    width: 164px;
  }

  .bar .tool {
    flex: 1;
    height: 18px;
  }

  .bar .caret-btn {
    width: 9px;
    color: #333;
  }

  .bar .caret-btn .caret {
    transform: scale(0.7);
  }

  .grip {
    flex: none;
    width: 3px;
    height: 14px;
    margin: 0 1px;
    background: repeating-linear-gradient(#444 0 1px, #666 1px 2px);
  }

  .sep {
    flex: none;
    width: 1px;
    height: 14px;
    margin: 0 2px;
    background: #3f3f3f;
  }

  .sep:last-child {
    display: none;
  }

  .bar-row > .bar:nth-child(2):not(.text) .tool {
    flex: none;
    width: 17px;
  }

  .combo {
    display: flex;
    align-items: center;
    gap: 4px;
    height: 16px;
    padding: 0 4px;
    box-sizing: border-box;
    background: linear-gradient(#fafafa, #dadada);
    color: #111;
  }

  .combo select {
    flex: 1;
  }

  .combo.layer {
    width: 229px;
    gap: 0;
  }

  .combo.layer .icon {
    width: 13px;
    height: 13px;
  }

  .combo.layer select {
    padding-left: 4px;
  }

  .combo.color {
    width: 114px;
  }

  .combo.linetype {
    width: 122px;
    gap: 6px;
  }

  .combo.lineweight {
    width: 96px;
  }

  .combo.plotstyle {
    width: 91px;
    padding-left: 7px;
    background: #f2f2f2;
    color: #9b9b9b;
  }

  .combo.plotstyle select {
    opacity: 1;
  }

  .combo.dimstyle {
    width: 90px;
    padding-left: 14px;
    margin-right: 1px;
  }

  .swatch {
    display: inline-block;
    flex: none;
    width: 6px;
    height: 6px;
    background: #00f0f8;
    border: 1px solid #111;
  }

  .sample {
    display: inline-block;
    flex: none;
    height: 1px;
    background: #444;
  }

  .linetype .sample {
    width: 45px;
  }

  .lineweight .sample {
    width: 27px;
  }

  /* main area */
  .body {
    display: flex;
    flex: 1;
  }

  .left {
    flex: 1;
    min-width: 0;
    display: flex;
    flex-direction: column;
  }

  .work {
    display: flex;
    flex: 1;
  }

  .side {
    display: flex;
    gap: 2px;
    width: 43px;
    box-sizing: border-box;
    border-right: 1px solid #333;
  }

  .side-col {
    display: flex;
    flex-direction: column;
  }

  .vbar {
    display: flex;
    flex-direction: column;
    width: 19px;
    box-sizing: border-box;
    border: 1px solid #444;
    background: #5a5a5a;
  }

  .vbar .tool {
    flex: 1;
  }

  .vgrip {
    flex: none;
    height: 4px;
    margin: 2px 4px 1px;
    background: repeating-linear-gradient(#444 0 1px, #666 1px 2px);
  }

  .modify {
    height: 327px;
  }

  .inquiry {
    height: 92px;
  }

  .draw {
    height: 310px;
  }

  .viewport {
    position: relative;
    flex: 1;
    background: #000;
    overflow: hidden;
  }

  .view-label {
    margin: 0;
    padding: 5px 3px;
    color: #d0d0d0;
  }

  .drawing {
    position: absolute;
    inset: 0;
    width: 100%;
    height: 100%;
  }

  .viewcube {
    position: absolute;
    top: 4px;
    right: 5px;
    width: 30px;
    height: 44px;
  }

  /* command window */
  .command {
    display: flex;
    height: 99px;
    box-sizing: border-box;
    border-top: 2px solid #666;
    border-bottom: 1px solid #666;
  }

  .command-side {
    display: flex;
    flex-direction: column;
    gap: 3px;
    width: 17px;
    background: linear-gradient(#8a8a8a, #3a3a3a);
    border-right: 1px solid #777;
    box-sizing: border-box;
  }

  .command-side button {
    height: 14px;
  }

  .command-side .icon {
    width: 10px;
    height: 10px;
  }

  .command-main {
    flex: 1;
    display: flex;
    flex-direction: column;
    background: #000;
    border-right: 1px solid #777;
    font-family: "DejaVu Sans Mono", "Liberation Mono", monospace;
    font-size: 9px;
  }

  .history {
    flex: 1;
    display: flex;
    flex-direction: column;
    justify-content: space-between;
    padding: 10px 2px 0;
    line-height: 11px;
    color: #e0e0e0;
    white-space: pre;
  }

  .command-line {
    display: flex;
    align-items: center;
    gap: 2px;
    height: 16px;
    padding-left: 4px;
    border-top: 1px solid #777;
  }

  .command-line .icon {
    width: 12px;
    height: 12px;
  }

  .command-line .caret {
    transform: scale(0.7);
    color: #999;
  }

  .command-line input {
    flex: 1;
    padding-left: 2px;
    font-style: italic;
  }

  .command-line input::placeholder {
    color: #a8a8a8;
  }

  /* properties palette */
  .properties {
    width: 233px;
    box-sizing: border-box;
    padding: 1px 14px 0 5px;
    border-left: 1px solid #484848;
  }

  h2 {
    margin: 0 -14px 7px -3px;
    padding: 0 10px;
    font-size: 9px;
    font-weight: 400;
    line-height: 18px;
    background: #515151;
  }

  .picker {
    display: flex;
    align-items: center;
    margin-right: -9px;
    margin-bottom: 3px;
  }

  .picker .tool {
    width: 19px;
  }

  .selection {
    display: flex;
    width: 164px;
    height: 17px;
    box-sizing: border-box;
    margin-right: 3px;
    border: 1px solid #444;
    background: linear-gradient(#646464, #747474);
  }

  .selection select {
    flex: 1;
    padding-left: 2px;
  }

  .arrow-box {
    display: flex;
    align-items: center;
    justify-content: center;
    width: 10px;
    border-left: 1px solid #444;
  }

  .arrow-box .caret {
    transform: scale(0.7);
  }

  .group {
    margin: 0 0 1px 3px;
  }

  .group-head {
    width: 100%;
    height: 15px;
    justify-content: space-between;
    padding: 0 4px;
    background: #484848;
    border: 1px solid #383838;
    font-weight: 700;
    color: #fff;
  }

  table {
    width: 197px;
    margin-left: 13px;
    border-collapse: collapse;
    table-layout: fixed;
  }

  tr {
    height: 15px;
  }

  tr:nth-child(even) {
    height: 14px;
  }

  th,
  td {
    box-sizing: border-box;
    padding: 0 0 0 4px;
    border: 1px solid #525252;
    font-weight: 400;
    text-align: left;
    white-space: nowrap;
    overflow: hidden;
  }

  th {
    width: 82px;
  }

  td {
    padding-left: 1px;
  }

  td .swatch {
    margin-right: 3px;
  }

  td .sample {
    width: 47px;
    margin: 0 2px 3px;
    background: #c4c4c4;
  }

  td.dim {
    color: #adadad;
  }

  /* status bar */
  footer {
    display: flex;
    height: 22px;
    background: #3a3a3a;
  }

  .layout-tabs {
    display: flex;
    width: 278px;
    padding-left: 9px;
    box-sizing: border-box;
  }

  .layout-tab {
    height: 14px;
    padding: 0 8px;
    background: #555;
    color: #c0c0c0;
    clip-path: polygon(0 0, 100% 0, calc(100% - 4px) 80%, calc(100% - 8px) 100%, 8px 100%, 4px 80%);
  }

  .layout-tab.active {
    background: linear-gradient(#666, #8e8e8e);
    color: #fff;
    font-weight: 700;
  }

  .layout-tab.add {
    padding: 0 6px;
  }

  .layout-tab .icon {
    width: 8px;
    height: 8px;
  }

  .status {
    flex: 1;
    display: flex;
    align-items: stretch;
    justify-content: space-between;
    padding: 1px 1px 1px 0;
    background: #606060;
    border-left: 1px solid #777;
    color: #f0f0f0;
  }

  .coords {
    width: 183px;
    padding-right: 3px;
    box-sizing: border-box;
    text-align: right;
    line-height: 20px;
    background: #4c4c4c;
  }

  .status-group {
    display: flex;
    background: #4c4c4c;
  }

  .status .tool {
    width: 18px;
  }

  .status .caret-btn {
    width: 12px;
  }

  .status .label-btn {
    padding: 0 2px;
  }

  .status .model .label-btn {
    padding: 0 3px;
  }
</style>
